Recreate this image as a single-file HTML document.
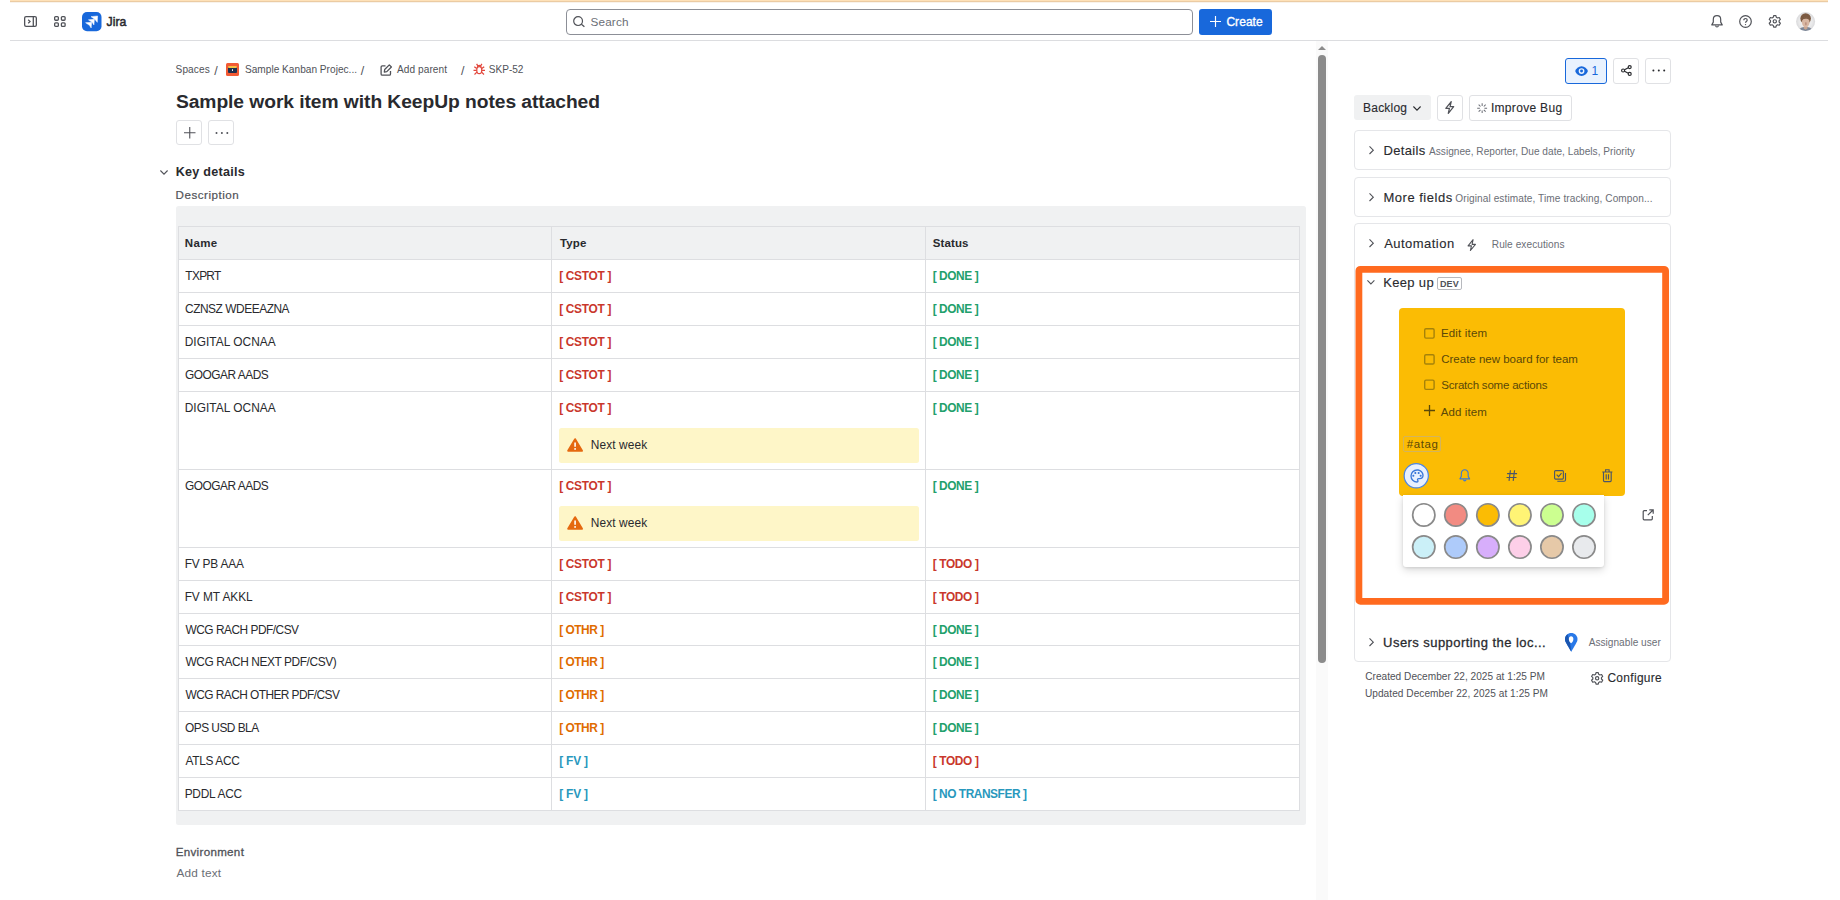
<!DOCTYPE html>
<html lang="en">
<head>
<meta charset="utf-8">
<title>SKP-52 Sample work item with KeepUp notes attached - Jira</title>
<style>
*{box-sizing:border-box;margin:0;padding:0}
html,body{width:1840px;height:900px;overflow:hidden;background:#fff}
body{font-family:"Liberation Sans",sans-serif;color:#292a2e;position:relative}
.abs{position:absolute}
.t{position:absolute;white-space:nowrap;line-height:1}
.m{-webkit-text-stroke:.3px currentColor}
svg{position:absolute;overflow:visible}
.btn{position:absolute;border:1px solid #e0e1e4;border-radius:3px;background:#fff}
.card{position:absolute;border:1px solid #e5e6e9;border-radius:4px;background:#fff}
.hl{position:absolute;left:178px;width:1122px;height:1px;background:#dddee1}
.vl{position:absolute;top:226px;width:1px;height:585px;background:#dddee1}
.panel{position:absolute;left:559px;width:360px;height:35px;background:#fef6c8;border-radius:2.5px}
.cb{position:absolute;left:1423.7px;width:11px;height:10.5px;border:1.2px solid #7d6407;border-radius:1.5px}
.circ{position:absolute;width:24px;height:24px;border-radius:50%;border:1.5px solid #8b8b8b}
</style>
</head>
<body>
<div class="abs" style="left:10px;top:0;width:1818px;height:1px;background:#fee1b8"></div><div class="abs" style="left:10px;top:1px;width:1818px;height:1px;background:#ebcba3"></div><div class="abs" style="left:10px;top:2px;width:1818px;height:1px;background:#f8f3ec"></div>
<div class="abs" style="left:10px;top:40px;width:1818px;height:1px;background:#dcdde0"></div>
<div id="header">
<svg style="left:24px;top:16px" width="13" height="11" viewBox="0 0 13 11"><rect x=".65" y=".65" width="11.7" height="9.7" rx="1.4" fill="none" stroke="#505258" stroke-width="1.3"/><path d="M9.3 .8v9.4" stroke="#505258" stroke-width="1.3"/><path d="M4.2 3.7l1.9 1.8-1.900 1.800" fill="none" stroke="#505258" stroke-width="1.200"/></svg>
<svg style="left:53.800px;top:16px" width="12" height="11" viewBox="0 0 12 11" fill="none" stroke="#505258" stroke-width="1.300"><rect x=".65" y=".65" width="3.700" height="3.600" rx=".95"/><rect x="7.400" y=".65" width="3.700" height="3.600" rx=".95"/><rect x=".65" y="6.800" width="3.700" height="3.600" rx=".95"/><rect x="7.400" y="6.800" width="3.700" height="3.600" rx=".95"/></svg>
<svg style="left:82.200px;top:12px" width="19.500" height="19.200" viewBox="0 0 19.500 19.200"><rect width="19.500" height="19.200" rx="5" fill="#1868db"/><path d="M9 4.650L15.600 4l-.3 6.350-2.500-3zM6.450 7.850l5.900-.5-.4 5.650-1.850-2.650zM3.600 10.700l6.050-.4-.5 5.700-1.700-2.650z" fill="#fff" stroke="#fff" stroke-width=".5" stroke-linejoin="round"/></svg>
<div class="t" id="jira" style="left:106.62px;top:16.00px;font-size:12.25px;color:#292a2e;letter-spacing:-0.033px;-webkit-text-stroke:.5px currentColor;">Jira</div>
<div class="abs" style="left:566px;top:9px;width:627px;height:26px;border:1px solid #8c8f97;border-radius:4px"></div>
<svg style="left:573px;top:16px" width="12" height="11" viewBox="0 0 12 11" fill="none" stroke="#505258" stroke-width="1.200"><circle cx="5.100" cy="5.100" r="4.400"/><path d="M8.400 8.200l3 2.600"/></svg>
<div class="t" id="search" style="left:590.57px;top:16.00px;font-size:11.75px;color:#6b6e76;letter-spacing:0.129px;">Search</div>
<div class="abs" style="left:1199.300px;top:8.700px;width:72.400px;height:26px;background:#1868db;border-radius:3px"></div>
<svg style="left:1210px;top:16.300px" width="11" height="11" viewBox="0 0 11 11" stroke="#fff" stroke-width="1.150"><path d="M5.500 0v11M0 5.500h11"/></svg>
<div class="t" id="create" style="left:1226.40px;top:16.00px;font-size:12px;color:#fff;letter-spacing:0.056px;-webkit-text-stroke:.35px #fff;">Create</div>
<svg style="left:1710.700px;top:14.800px" width="12" height="13" viewBox="0 0 12 13" fill="none" stroke="#505258" stroke-width="1.200"><path d="M6 .7c-2.200 0-3.700 1.600-3.700 3.700v2.700L.8 9.900h10.400L9.700 7.100V4.400C9.700 2.300 8.200.7 6 .7z" stroke-linejoin="round"/><path d="M4.500 10.500c.2 1 .8 1.500 1.500 1.500s1.300-.5 1.500-1.500"/></svg>
<svg style="left:1739.200px;top:14.900px" width="13" height="13" viewBox="0 0 13 13" fill="none" stroke="#505258" stroke-width="1.200"><circle cx="6.500" cy="6.500" r="5.800"/><path d="M4.800 5.200c0-1 .8-1.700 1.700-1.700s1.700.7 1.700 1.600c0 1.300-1.700 1.300-1.700 2.600"/><circle cx="6.500" cy="9.600" r=".7" fill="#505258" stroke="none"/></svg>
<svg style="left:0;top:0" width="1" height="1" fill="none" stroke="#505258" stroke-width="1.15" stroke-linejoin="round"><path d="M1776.36 17.29L1775.93 15.56L1773.67 15.56L1773.24 17.29L1772.06 17.97L1770.35 17.48L1769.22 19.43L1770.50 20.67L1770.50 22.03L1769.22 23.27L1770.35 25.22L1772.06 24.73L1773.24 25.41L1773.67 27.14L1775.93 27.14L1776.36 25.41L1777.54 24.73L1779.25 25.22L1780.38 23.27L1779.10 22.03L1779.10 20.67L1780.38 19.43L1779.25 17.48L1777.54 17.97z"/><circle cx="1774.8" cy="21.35" r="1.65"/></svg>
<svg id="avatar" style="left:1795.900px;top:12.100px" width="19.200" height="19.200" viewBox="0 0 19.200 19.200"><defs><clipPath id="avc"><circle cx="9.600" cy="9.600" r="9.500"/></clipPath><radialGradient id="avg" cx="50%" cy="50%" r="50%"><stop offset="0" stop-color="#f6f6f6"/><stop offset=".7" stop-color="#e9e9ea"/><stop offset="1" stop-color="#d9d9db"/></radialGradient><filter id="avb" x="-20%" y="-20%" width="140%" height="140%"><feGaussianBlur stdDeviation=".45"/></filter></defs><circle cx="9.600" cy="9.600" r="9.500" fill="url(#avg)"/><g clip-path="url(#avc)" filter="url(#avb)"><path d="M2.800 19.500c.3-3.200 2.600-4.600 6.800-4.600s6.500 1.400 6.800 4.600z" fill="#7d8798"/><path d="M7.800 14.200h3.700v2.300l-1.850 1.300-1.850-1.300z" fill="#c9a58f"/><ellipse cx="9.650" cy="6.600" rx="5.300" ry="5.300" fill="#7b5a42"/><ellipse cx="9.750" cy="10.300" rx="3.800" ry="4.900" fill="#d8b7a3"/><path d="M5.700 8.200c.5-2.300 2-3.300 4-3.300s3.600 1 4 3.100c-1.300-.9-2.300-1.300-3.800-1.300s-2.900.5-4.200 1.500z" fill="#7b5a42"/><ellipse cx="9.900" cy="11.800" rx=".8" ry="1.700" fill="#b98e7c"/></g></svg>
</div>
<div id="main">
<div class="t" id="bc1" style="left:175.55px;top:65.00px;font-size:10.1px;color:#505258;letter-spacing:0.105px;">Spaces</div>
<div class="t" style="left:214.20px;top:65.00px;font-size:12.5px;color:#505258;">/</div>
<div class="abs" style="left:226px;top:63px;width:13px;height:13px;background:#f25a34;border-radius:1.500px"><div class="abs" style="left:2px;top:3.500px;width:9px;height:6.500px;background:#1e2f4d;border-radius:1px"></div><div class="abs" style="left:2px;top:3px;width:9px;height:1.500px;background:#f5c043;border-radius:1px"></div><div class="abs" style="left:5.700px;top:6.300px;width:1.600px;height:1.600px;background:#fff;border-radius:1px"></div></div>
<div class="t" id="bc2" style="left:244.95px;top:65.00px;font-size:10.1px;color:#505258;letter-spacing:0.021px;">Sample Kanban Projec...</div>
<div class="t" style="left:360.80px;top:65.00px;font-size:12.5px;color:#505258;">/</div>
<svg style="left:380px;top:63.500px" width="12.500" height="12" viewBox="0 0 12.500 12" fill="none" stroke="#505258" stroke-width="1.300"><path d="M5.500 1.800H2.300a1.200 1.200 0 0 0-1.200 1.200v7a1.200 1.200 0 0 0 1.200 1.200h7a1.200 1.200 0 0 0 1.200-1.200V7"/><path d="M9.300.9l2.100 2.100-4.600 4.600-2.500.4.400-2.500z" stroke-linejoin="round"/></svg>
<div class="t" id="bc3" style="left:397.00px;top:65.00px;font-size:10.1px;color:#505258;letter-spacing:0.074px;">Add parent</div>
<div class="t" style="left:461.10px;top:65.00px;font-size:12.5px;color:#505258;">/</div>
<svg style="left:472.500px;top:63px" width="12.500" height="13" viewBox="0 0 12.500 13" fill="none" stroke="#e2483d" stroke-width="1.250"><ellipse cx="6.250" cy="7.200" rx="2.500" ry="3.500"/><path d="M4.500 4a1.750 1.750 0 0 1 3.500 0M3.800 5.600L1.300 3.700M8.700 5.600l2.500-1.900M3.700 7.300H.5M8.800 7.300H12M3.900 9.100L1.500 11.500M8.600 9.100l2.400 2.400M4.700 2.600L3.600.9M7.800 2.600L8.900.9"/></svg>
<div class="t" id="bc4" style="left:488.80px;top:65.00px;font-size:10.1px;color:#505258;letter-spacing:-0.027px;">SKP-52</div>
<div class="t" id="title" style="left:175.92px;top:92.00px;font-size:19.25px;color:#292a2e;letter-spacing:-0.064px;font-weight:700;">Sample work item with KeepUp notes attached</div>
<div class="btn" style="left:176.200px;top:119.800px;width:25.600px;height:25.500px"></div>
<svg style="left:183.500px;top:127px" width="11.500" height="11.500" viewBox="0 0 11.500 11.500" stroke="#505258" stroke-width="1.100"><path d="M5.750 0v11.500M0 5.750h11.500"/></svg>
<div class="btn" style="left:208.300px;top:119.800px;width:25.600px;height:25.500px"></div>
<svg style="left:214.500px;top:131px" width="14" height="4" viewBox="0 0 14 4" fill="#505258"><circle cx="1.500" cy="1.900" r="1"/><circle cx="6.900" cy="1.900" r="1"/><circle cx="12.300" cy="1.900" r="1"/></svg>
<svg style="left:159.500px;top:169.500px" width="8" height="5" viewBox="0 0 8 5" fill="none" stroke="#505258" stroke-width="1.100"><path d="M.4.500l3.600 3.600L7.600.5"/></svg>
<div class="t" id="key" style="left:175.68px;top:166.00px;font-size:12.6px;color:#292a2e;letter-spacing:0.260px;font-weight:700;">Key details</div>
<div class="t" id="desc" style="left:175.57px;top:189.00px;font-size:11.6px;color:#505258;letter-spacing:0.512px;-webkit-text-stroke:.2px #505258;">Description</div>
<div class="abs" style="left:176px;top:206px;width:1130px;height:619px;background:#f0f1f2;border-radius:2.500px"></div>
<div class="abs" style="left:178px;top:259px;width:1122px;height:552px;background:#fff"></div>
<div class="hl" style="top:226px"></div>
<div class="hl" style="top:259px"></div>
<div class="hl" style="top:292px"></div>
<div class="hl" style="top:325px"></div>
<div class="hl" style="top:358px"></div>
<div class="hl" style="top:391px"></div>
<div class="hl" style="top:469px"></div>
<div class="hl" style="top:547px"></div>
<div class="hl" style="top:580px"></div>
<div class="hl" style="top:613px"></div>
<div class="hl" style="top:645px"></div>
<div class="hl" style="top:678px"></div>
<div class="hl" style="top:711px"></div>
<div class="hl" style="top:744px"></div>
<div class="hl" style="top:777px"></div>
<div class="hl" style="top:810px"></div>
<div class="vl" style="left:178px"></div>
<div class="vl" style="left:551.4px"></div>
<div class="vl" style="left:925px"></div>
<div class="vl" style="left:1299px"></div>
<div class="t" id="h1" style="left:184.85px;top:238.00px;font-size:11.5px;color:#292a2e;letter-spacing:0.352px;font-weight:700;">Name</div>
<div class="t" id="h2" style="left:559.88px;top:238.00px;font-size:11.5px;color:#292a2e;letter-spacing:0.190px;font-weight:700;">Type</div>
<div class="t" id="h3" style="left:932.75px;top:238.00px;font-size:11.5px;color:#292a2e;letter-spacing:0.115px;font-weight:700;">Status</div>
<div class="t" style="left:185.36px;top:271.00px;font-size:11.9px;color:#292a2e;letter-spacing:-0.705px;">TXPRT</div>
<div class="t" style="left:559.15px;top:271.00px;font-size:11.9px;color:#c9372c;letter-spacing:-0.296px;font-weight:700;">[ CSTOT ]</div>
<div class="t" style="left:932.65px;top:271.00px;font-size:11.9px;color:#22a06b;letter-spacing:-0.408px;font-weight:700;">[ DONE ]</div>
<div class="t" style="left:185.00px;top:304.00px;font-size:11.9px;color:#292a2e;letter-spacing:-0.444px;">CZNSZ WDEEAZNA</div>
<div class="t" style="left:559.15px;top:304.00px;font-size:11.9px;color:#c9372c;letter-spacing:-0.296px;font-weight:700;">[ CSTOT ]</div>
<div class="t" style="left:932.65px;top:304.00px;font-size:11.9px;color:#22a06b;letter-spacing:-0.408px;font-weight:700;">[ DONE ]</div>
<div class="t" style="left:184.65px;top:337.00px;font-size:11.9px;color:#292a2e;letter-spacing:0.049px;">DIGITAL OCNAA</div>
<div class="t" style="left:559.15px;top:337.00px;font-size:11.9px;color:#c9372c;letter-spacing:-0.296px;font-weight:700;">[ CSTOT ]</div>
<div class="t" style="left:932.65px;top:337.00px;font-size:11.9px;color:#22a06b;letter-spacing:-0.408px;font-weight:700;">[ DONE ]</div>
<div class="t" style="left:185.00px;top:370.00px;font-size:11.9px;color:#292a2e;letter-spacing:-0.482px;">GOOGAR AADS</div>
<div class="t" style="left:559.15px;top:370.00px;font-size:11.9px;color:#c9372c;letter-spacing:-0.296px;font-weight:700;">[ CSTOT ]</div>
<div class="t" style="left:932.65px;top:370.00px;font-size:11.9px;color:#22a06b;letter-spacing:-0.408px;font-weight:700;">[ DONE ]</div>
<div class="t" style="left:184.65px;top:403.00px;font-size:11.9px;color:#292a2e;letter-spacing:0.049px;">DIGITAL OCNAA</div>
<div class="t" style="left:559.15px;top:403.00px;font-size:11.9px;color:#c9372c;letter-spacing:-0.296px;font-weight:700;">[ CSTOT ]</div>
<div class="t" style="left:932.65px;top:403.00px;font-size:11.9px;color:#22a06b;letter-spacing:-0.408px;font-weight:700;">[ DONE ]</div>
<div class="t" style="left:185.00px;top:481.00px;font-size:11.9px;color:#292a2e;letter-spacing:-0.482px;">GOOGAR AADS</div>
<div class="t" style="left:559.15px;top:481.00px;font-size:11.9px;color:#c9372c;letter-spacing:-0.296px;font-weight:700;">[ CSTOT ]</div>
<div class="t" style="left:932.65px;top:481.00px;font-size:11.9px;color:#22a06b;letter-spacing:-0.408px;font-weight:700;">[ DONE ]</div>
<div class="t" style="left:184.65px;top:559.00px;font-size:11.9px;color:#292a2e;letter-spacing:-0.195px;">FV PB AAA</div>
<div class="t" style="left:559.15px;top:559.00px;font-size:11.9px;color:#c9372c;letter-spacing:-0.296px;font-weight:700;">[ CSTOT ]</div>
<div class="t" style="left:932.65px;top:559.00px;font-size:11.9px;color:#c9372c;letter-spacing:-0.346px;font-weight:700;">[ TODO ]</div>
<div class="t" style="left:184.65px;top:592.00px;font-size:11.9px;color:#292a2e;letter-spacing:-0.048px;">FV MT AKKL</div>
<div class="t" style="left:559.15px;top:592.00px;font-size:11.9px;color:#c9372c;letter-spacing:-0.296px;font-weight:700;">[ CSTOT ]</div>
<div class="t" style="left:932.65px;top:592.00px;font-size:11.9px;color:#c9372c;letter-spacing:-0.346px;font-weight:700;">[ TODO ]</div>
<div class="t" style="left:185.54px;top:625.00px;font-size:11.9px;color:#292a2e;letter-spacing:-0.494px;">WCG RACH PDF/CSV</div>
<div class="t" style="left:559.15px;top:625.00px;font-size:11.9px;color:#e06c00;letter-spacing:-0.449px;font-weight:700;">[ OTHR ]</div>
<div class="t" style="left:932.65px;top:625.00px;font-size:11.9px;color:#22a06b;letter-spacing:-0.408px;font-weight:700;">[ DONE ]</div>
<div class="t" style="left:185.54px;top:657.00px;font-size:11.9px;color:#292a2e;letter-spacing:-0.407px;">WCG RACH NEXT PDF/CSV)</div>
<div class="t" style="left:559.15px;top:657.00px;font-size:11.9px;color:#e06c00;letter-spacing:-0.449px;font-weight:700;">[ OTHR ]</div>
<div class="t" style="left:932.65px;top:657.00px;font-size:11.9px;color:#22a06b;letter-spacing:-0.408px;font-weight:700;">[ DONE ]</div>
<div class="t" style="left:185.54px;top:690.00px;font-size:11.9px;color:#292a2e;letter-spacing:-0.547px;">WCG RACH OTHER PDF/CSV</div>
<div class="t" style="left:559.15px;top:690.00px;font-size:11.9px;color:#e06c00;letter-spacing:-0.449px;font-weight:700;">[ OTHR ]</div>
<div class="t" style="left:932.65px;top:690.00px;font-size:11.9px;color:#22a06b;letter-spacing:-0.408px;font-weight:700;">[ DONE ]</div>
<div class="t" style="left:185.06px;top:723.00px;font-size:11.9px;color:#292a2e;letter-spacing:-0.528px;">OPS USD BLA</div>
<div class="t" style="left:559.15px;top:723.00px;font-size:11.9px;color:#e06c00;letter-spacing:-0.449px;font-weight:700;">[ OTHR ]</div>
<div class="t" style="left:932.65px;top:723.00px;font-size:11.9px;color:#22a06b;letter-spacing:-0.408px;font-weight:700;">[ DONE ]</div>
<div class="t" style="left:185.60px;top:756.00px;font-size:11.9px;color:#292a2e;letter-spacing:-0.347px;">ATLS ACC</div>
<div class="t" style="left:559.15px;top:756.00px;font-size:11.9px;color:#2898bd;letter-spacing:-0.168px;font-weight:700;">[ FV ]</div>
<div class="t" style="left:932.65px;top:756.00px;font-size:11.9px;color:#c9372c;letter-spacing:-0.346px;font-weight:700;">[ TODO ]</div>
<div class="t" style="left:184.65px;top:789.00px;font-size:11.9px;color:#292a2e;letter-spacing:-0.222px;">PDDL ACC</div>
<div class="t" style="left:559.15px;top:789.00px;font-size:11.9px;color:#2898bd;letter-spacing:-0.168px;font-weight:700;">[ FV ]</div>
<div class="t" style="left:932.65px;top:789.00px;font-size:11.9px;color:#2898bd;letter-spacing:-0.442px;font-weight:700;">[ NO TRANSFER ]</div>
<div class="panel" style="top:427.8px"></div>
<svg style="left:566.900px;top:438.0px" width="16.200" height="14" viewBox="0 0 16.200 14"><path d="M8.100 1.200L15 12.800H1.200z" fill="#e56910" stroke="#e56910" stroke-width="2" stroke-linejoin="round"/><path d="M8.100 4.600v4.200" stroke="#fff" stroke-width="1.600"/><circle cx="8.100" cy="10.900" r=".95" fill="#fff"/></svg>
<div class="t" style="left:590.75px;top:440.00px;font-size:11.9px;color:#292a2e;letter-spacing:0.110px;">Next week</div>
<div class="panel" style="top:505.8px"></div>
<svg style="left:566.900px;top:516.0px" width="16.200" height="14" viewBox="0 0 16.200 14"><path d="M8.100 1.200L15 12.800H1.200z" fill="#e56910" stroke="#e56910" stroke-width="2" stroke-linejoin="round"/><path d="M8.100 4.600v4.200" stroke="#fff" stroke-width="1.600"/><circle cx="8.100" cy="10.900" r=".95" fill="#fff"/></svg>
<div class="t" style="left:590.75px;top:518.00px;font-size:11.9px;color:#292a2e;letter-spacing:0.110px;">Next week</div>
<div class="t" id="env" style="left:175.67px;top:846.00px;font-size:11.6px;color:#505258;letter-spacing:0.311px;-webkit-text-stroke:.3px #505258;">Environment</div>
<div class="t" id="addtext" style="left:176.60px;top:868.00px;font-size:11.8px;color:#6b6e76;letter-spacing:0.159px;">Add text</div>
</div>
<div class="abs" style="left:1316px;top:41px;width:12px;height:859px;background:#fafafa"></div>
<div class="abs" style="left:1318px;top:55px;width:8px;height:608px;background:#8b8b8b;border-radius:4px"></div>
<svg style="left:1318px;top:46px" width="8" height="4" viewBox="0 0 8 4"><path d="M0 4l4-4 4 4z" fill="#8b8b8b"/></svg>
<div id="right">
<div class="abs" style="left:1565.200px;top:57.900px;width:41.600px;height:25.800px;border:1px solid #1868db;border-radius:3px;background:#e9f2fe"></div>
<svg style="left:1574.700px;top:65.600px" width="13.100" height="10.200" viewBox="0 0 14 11"><path d="M7 .2C3.700.2 1.200 2.500.1 5.500c1.100 3 3.600 5.300 6.900 5.300s5.800-2.300 6.900-5.300C12.800 2.500 10.300.2 7 .2z" fill="#1868db"/><circle cx="7" cy="5.500" r="3.100" fill="#e9f2fe"/><circle cx="7" cy="5.500" r="1.600" fill="#1868db"/></svg>
<div class="t" id="w1" style="left:1591.50px;top:65.00px;font-size:12px;color:#1868db;">1</div>
<div class="btn" style="left:1613px;top:57.900px;width:25.700px;height:25.800px"></div>
<svg style="left:1620.700px;top:65.300px" width="11" height="11" viewBox="0 0 11 11" fill="none" stroke="#292a2e" stroke-width="1.200"><circle cx="8.700" cy="2.100" r="1.500"/><circle cx="8.700" cy="8.900" r="1.500"/><circle cx="2.100" cy="5.500" r="1.500"/><path d="M3.500 4.800l3.800-2M3.500 6.200l3.800 2"/></svg>
<div class="btn" style="left:1645.200px;top:57.900px;width:25.600px;height:25.800px"></div>
<svg style="left:1651.600px;top:69.300px" width="14" height="3" viewBox="0 0 14 3" fill="#292a2e"><circle cx="1.400" cy="1.500" r="1"/><circle cx="6.800" cy="1.500" r="1"/><circle cx="12.200" cy="1.500" r="1"/></svg>
<div class="abs" style="left:1354px;top:95.200px;width:76.800px;height:25px;background:#f0f1f2;border-radius:3px"></div>
<div class="t" id="backlog" style="left:1363.04px;top:102.00px;font-size:12px;color:#292a2e;letter-spacing:0.220px;-webkit-text-stroke:.12px currentColor;">Backlog</div>
<svg style="left:1412.500px;top:105.800px" width="8" height="5" viewBox="0 0 8 5" fill="none" stroke="#292a2e" stroke-width="1.100"><path d="M.4.500l3.600 3.600L7.600.5"/></svg>
<div class="btn" style="left:1437.200px;top:95.200px;width:25.600px;height:25.500px"></div>
<svg style="left:1445.300px;top:100.800px" width="9.500" height="13" viewBox="0 0 9.500 13" fill="none" stroke="#505258" stroke-width="1.250" stroke-linejoin="round"><path d="M6.200.7L.8 7.300h3.600L3.300 12.300l5.400-6.600H5.100z"/></svg>
<div class="btn" style="left:1469.300px;top:95.200px;width:102.400px;height:25.500px"></div>
<svg style="left:1476.800px;top:102.800px" width="10.300" height="10.300" viewBox="0 0 10 10" stroke="#6b6e76" stroke-width="1" fill="none"><path d="M5 .2v2.600M5 7.200v2.600M.2 5h2.600M7.200 5h2.600M1.600 1.600l1.800 1.800M6.600 6.600l1.800 1.800M8.400 1.600L6.600 3.400M3.400 6.600L1.600 8.400"/></svg>
<div class="t" id="improve" style="left:1490.92px;top:102.00px;font-size:12px;color:#292a2e;letter-spacing:0.316px;-webkit-text-stroke:.12px currentColor;">Improve Bug</div>
<div class="card" style="left:1354px;top:130px;width:317px;height:40px"></div>
<svg style="left:1368.700px;top:146px" width="5" height="8.400" viewBox="0 0 5 8.400" fill="none" stroke="#505258" stroke-width="1.100"><path d="M.5.400l3.800 3.800L.5 8"/></svg>
<div class="t" id="details" style="left:1383.46px;top:144.00px;font-size:13px;color:#292a2e;letter-spacing:0.347px;-webkit-text-stroke:.12px currentColor;">Details</div>
<div class="t" id="details_s" style="left:1429.00px;top:147.00px;font-size:10.1px;color:#6b6e76;letter-spacing:0.024px;">Assignee, Reporter, Due date, Labels, Priority</div>
<div class="card" style="left:1354px;top:177px;width:317px;height:39.500px"></div>
<svg style="left:1368.700px;top:192.8px" width="5" height="8.400" viewBox="0 0 5 8.400" fill="none" stroke="#505258" stroke-width="1.100"><path d="M.5.400l3.800 3.800L.5 8"/></svg>
<div class="t" id="more" style="left:1383.46px;top:191.00px;font-size:13px;color:#292a2e;letter-spacing:0.513px;-webkit-text-stroke:.12px currentColor;">More fields</div>
<div class="t" id="more_s" style="left:1455.25px;top:194.00px;font-size:10.1px;color:#6b6e76;letter-spacing:0.090px;">Original estimate, Time tracking, Compon...</div>
<div class="card" style="left:1354px;top:223px;width:317px;height:438.500px"></div>
<svg style="left:1368.700px;top:239.4px" width="5" height="8.400" viewBox="0 0 5 8.400" fill="none" stroke="#505258" stroke-width="1.100"><path d="M.5.400l3.800 3.800L.5 8"/></svg>
<div class="t" id="auto" style="left:1384.20px;top:237.00px;font-size:13px;color:#292a2e;letter-spacing:0.467px;-webkit-text-stroke:.12px currentColor;">Automation</div>
<svg style="left:1467px;top:238.500px" width="9.500" height="12.200" viewBox="0 0 9.500 13" fill="none" stroke="#505258" stroke-width="1.150" stroke-linejoin="round"><path d="M6.200.7L.8 7.300h3.600L3.300 12.300l5.400-6.600H5.100z"/></svg>
<div class="t" id="rule" style="left:1491.79px;top:240.00px;font-size:10.1px;color:#6b6e76;letter-spacing:0.064px;">Rule executions</div>
<svg style="left:0;top:0" width="1" height="1"><rect x="1358.900" y="269.300" width="306.700" height="332.100" rx="1.500" fill="none" stroke="#ff6a1f" stroke-width="6.800" stroke-linejoin="round"/></svg>
<svg style="left:1366.600px;top:280.300px" width="7.800" height="4.400" viewBox="0 0 7.800 4.400" fill="none" stroke="#505258" stroke-width="1.100"><path d="M.4.400l3.500 3.500L7.400.4"/></svg>
<div class="t" id="keep" style="left:1383.16px;top:276.00px;font-size:13px;color:#292a2e;letter-spacing:0.339px;-webkit-text-stroke:.12px currentColor;">Keep up</div>
<div class="abs" style="left:1437.400px;top:277px;width:24.400px;height:12.700px;border:1px solid #b7b9be;border-radius:2px"></div>
<div class="t" id="dev" style="left:1440.01px;top:280.00px;font-size:9px;color:#505258;letter-spacing:0.067px;font-weight:700;">DEV</div>
<div class="abs" style="left:1399.300px;top:307.800px;width:225.600px;height:187.800px;background:#fbbc04;border-radius:4px"></div>
<svg style="left:0;top:0" width="1" height="1"><rect x="1424.700" y="328.80" width="9.400" height="9.300" rx="1.300" fill="none" stroke="#a5820a" stroke-width="1.400"/></svg>
<div class="t" id="s1" style="left:1440.88px;top:328.00px;font-size:11.5px;color:#5a4808;letter-spacing:0.192px;">Edit item</div>
<svg style="left:0;top:0" width="1" height="1"><rect x="1424.700" y="354.70" width="9.400" height="9.300" rx="1.300" fill="none" stroke="#a5820a" stroke-width="1.400"/></svg>
<div class="t" id="s2" style="left:1441.22px;top:354.00px;font-size:11.5px;color:#5a4808;letter-spacing:-0.003px;">Create new board for team</div>
<svg style="left:0;top:0" width="1" height="1"><rect x="1424.700" y="380.10" width="9.400" height="9.300" rx="1.300" fill="none" stroke="#a5820a" stroke-width="1.400"/></svg>
<div class="t" id="s3" style="left:1441.28px;top:380.00px;font-size:11.5px;color:#5a4808;letter-spacing:-0.201px;">Scratch some actions</div>
<svg style="left:1424.300px;top:405.100px" width="11" height="11" viewBox="0 0 11 11" stroke="#5a4808" stroke-width="1.300"><path d="M5.500 0v11M0 5.500h11"/></svg>
<div class="t" id="s4" style="left:1440.80px;top:407.00px;font-size:11.5px;color:#5a4808;letter-spacing:0.089px;">Add item</div>
<div class="abs" style="left:1403px;top:436.300px;width:38px;height:16px;border:1px solid #d3b45c;border-radius:2px"></div>
<div class="t" id="s5" style="left:1406.64px;top:439.00px;font-size:11.5px;color:#5a4808;letter-spacing:0.649px;">#atag</div>
<svg style="left:0;top:0" width="1" height="1"><circle cx="1416.250" cy="475.750" r="12.100" fill="#e8f0fe" stroke="#4a86e8" stroke-width="1.200"/></svg>
<svg style="left:1408.650px;top:467.500px" width="16" height="16" viewBox="0 0 24 24" fill="#3b78d8"><path d="M12,22A10,10 0 0,1 2,12A10,10 0 0,1 12,2C17.5,2 22,6 22,11A6,6 0 0,1 16,17H14.2C13.9,17 13.7,17.2 13.7,17.5C13.7,17.6 13.8,17.7 13.8,17.8C14.2,18.3 14.4,18.9 14.4,19.5C14.5,20.9 13.4,22 12,22M12,4A8,8 0 0,0 4,12A8,8 0 0,0 12,20C12.3,20 12.5,19.8 12.5,19.5C12.5,19.3 12.4,19.2 12.4,19.1C12,18.6 11.8,18.1 11.8,17.5C11.8,16.1 12.9,15 14.3,15H16A4,4 0 0,0 20,11C20,7.1 16.4,4 12,4M6.5,10C7.3,10 8,10.7 8,11.5C8,12.3 7.3,13 6.5,13C5.7,13 5,12.3 5,11.5C5,10.7 5.7,10 6.5,10M9.5,6C10.3,6 11,6.7 11,7.5C11,8.3 10.3,9 9.500,9C8.700,9 8,8.300 8,7.500C8,6.700 8.700,6 9.500,6M14.500,6C15.300,6 16,6.700 16,7.500C16,8.300 15.300,9 14.500,9C13.700,9 13,8.300 13,7.500C13,6.700 13.700,6 14.500,6M17.500,10C18.300,10 19,10.700 19,11.500C19,12.300 18.300,13 17.500,13C16.700,13 16,12.300 16,11.500C16,10.700 16.700,10 17.500,10Z"/></svg>
<svg style="left:1458.900px;top:468.900px" width="11.500" height="13.300" viewBox="0 0 12 14" fill="none" stroke="#3b78d8" stroke-width="1.150"><path d="M6 .8c-2.200 0-3.600 1.700-3.600 3.800v3L.9 10.400h10.200L9.600 7.600v-3C9.600 2.500 8.200.8 6 .8z" stroke-linejoin="round"/><path d="M4.600 11.300c.2.800.7 1.200 1.400 1.200s1.200-.4 1.400-1.200"/></svg>
<svg style="left:1506.200px;top:470px" width="11.600" height="11.100" viewBox="0 0 12 12" stroke="#4b5568" stroke-width="1.250" fill="none"><path d="M4.500.3L3 11.700M9 .3L7.500 11.700M.9 3.900h10.800M.3 8.100h10.800"/></svg>
<svg style="left:1554.400px;top:470px" width="12.700" height="12.200" viewBox="0 0 13 12.500" fill="none" stroke="#4b5568" stroke-width="1.150"><rect x=".6" y=".6" width="9" height="8.700" rx="1"/><path d="M11.800 3.200v6.900a1.500 1.500 0 0 1-1.500 1.500H3.400"/><path d="M2.700 4.800l2 2 3-3.500"/></svg>
<svg style="left:1602.200px;top:468.900px" width="10.700" height="13.300" viewBox="0 0 10.700 13.300" fill="none" stroke="#4b5568" stroke-width="1.150"><path d="M.3 3h10.100M3.600 2.700V.7h3.500v2M1.500 3.200v8.400a1 1 0 0 0 1 1h5.700a1 1 0 0 0 1-1V3.200M4.200 5.200v5.400M6.500 5.200v5.400"/></svg>
<div class="abs" style="left:1403.300px;top:495px;width:201.100px;height:71.700px;background:#fff;border-radius:0 0 3px 3px;box-shadow:0 3px 8px rgba(0,0,0,.15),0 1px 3px rgba(0,0,0,.10)"></div>
<svg style="left:0;top:0" width="1" height="1" stroke="#8a8a8a" stroke-width="1.700"><circle cx="1423.80" cy="514.90" r="11.150" fill="#ffffff"/><circle cx="1455.84" cy="514.90" r="11.150" fill="#f28b82"/><circle cx="1487.88" cy="514.90" r="11.150" fill="#fbbc04"/><circle cx="1519.92" cy="514.90" r="11.150" fill="#fff475"/><circle cx="1551.96" cy="514.90" r="11.150" fill="#ccff90"/><circle cx="1584.00" cy="514.90" r="11.150" fill="#a7ffeb"/><circle cx="1423.80" cy="547.10" r="11.150" fill="#cbf0f8"/><circle cx="1455.84" cy="547.10" r="11.150" fill="#aecbfa"/><circle cx="1487.88" cy="547.10" r="11.150" fill="#d7aefb"/><circle cx="1519.92" cy="547.10" r="11.150" fill="#fdcfe8"/><circle cx="1551.96" cy="547.10" r="11.150" fill="#e6c9a8"/><circle cx="1584.00" cy="547.10" r="11.150" fill="#e8eaed"/></svg>
<svg style="left:1642px;top:509px" width="12" height="12" viewBox="0 0 12 12" fill="none" stroke="#505258" stroke-width="1.200"><path d="M5 1.700H2.200a1 1 0 0 0-1 1v7.100a1 1 0 0 0 1 1h7.100a1 1 0 0 0 1-1V7"/><path d="M7.300.8h3.900v3.900M11 1L5.800 6.200"/></svg>
<svg style="left:1368.700px;top:638px" width="5" height="8.400" viewBox="0 0 5 8.400" fill="none" stroke="#505258" stroke-width="1.100"><path d="M.5.400l3.800 3.800L.5 8"/></svg>
<div class="t" id="users" style="left:1383.12px;top:636.00px;font-size:13px;color:#292a2e;letter-spacing:0.442px;-webkit-text-stroke:.28px currentColor;">Users supporting the loc...</div>
<svg style="left:1564.700px;top:633px" width="12.500" height="18.800" viewBox="0 0 12.500 18.800"><path d="M6.250 0C2.800 0 0 2.700 0 6.100c0 1.800.7 3.100 1.600 4.700L6.250 18.800l4.650-8c.9-1.600 1.600-2.900 1.600-4.700C12.500 2.700 9.700 0 6.250 0z" fill="#2979e8"/><path d="M0 6.100c0 1.800.7 3.100 1.600 4.700L6.250 18.800 5 9.500 2.500 1.300C.9 2.400 0 4.100 0 6.100z" fill="#1a56b0"/><path d="M6.100 3.200c1.300 0 2.300 1.200 2.300 2.800 0 1.700-1 3.300-2.300 4.200C4.800 9.300 3.800 7.700 3.800 6c0-1.600 1-2.800 2.300-2.800z" fill="#fff"/></svg>
<div class="t" id="assignable" style="left:1588.70px;top:638.00px;font-size:10.1px;color:#6b6e76;letter-spacing:0.021px;">Assignable user</div>
<div class="t" id="created" style="left:1365.19px;top:672.00px;font-size:10.1px;color:#505258;letter-spacing:0.023px;">Created December 22, 2025 at 1:25 PM</div>
<div class="t" id="updated" style="left:1364.94px;top:689.00px;font-size:10.1px;color:#505258;letter-spacing:0.053px;">Updated December 22, 2025 at 1:25 PM</div>
<svg style="left:0;top:0" width="1" height="1" fill="none" stroke="#505258" stroke-width="1.15" stroke-linejoin="round"><path d="M1598.71 674.29L1598.28 672.56L1596.02 672.56L1595.59 674.29L1594.41 674.97L1592.70 674.48L1591.57 676.43L1592.85 677.67L1592.85 679.03L1591.57 680.27L1592.70 682.22L1594.41 681.73L1595.59 682.41L1596.02 684.14L1598.28 684.14L1598.71 682.41L1599.89 681.73L1601.60 682.22L1602.73 680.27L1601.45 679.03L1601.45 677.67L1602.73 676.43L1601.60 674.48L1599.89 674.97z"/><circle cx="1597.15" cy="678.35" r="1.65"/></svg>
<div class="t" id="configure" style="left:1607.40px;top:673.00px;font-size:11.9px;color:#292a2e;letter-spacing:0.348px;-webkit-text-stroke:.12px currentColor;">Configure</div>
</div>
</body>
</html>
